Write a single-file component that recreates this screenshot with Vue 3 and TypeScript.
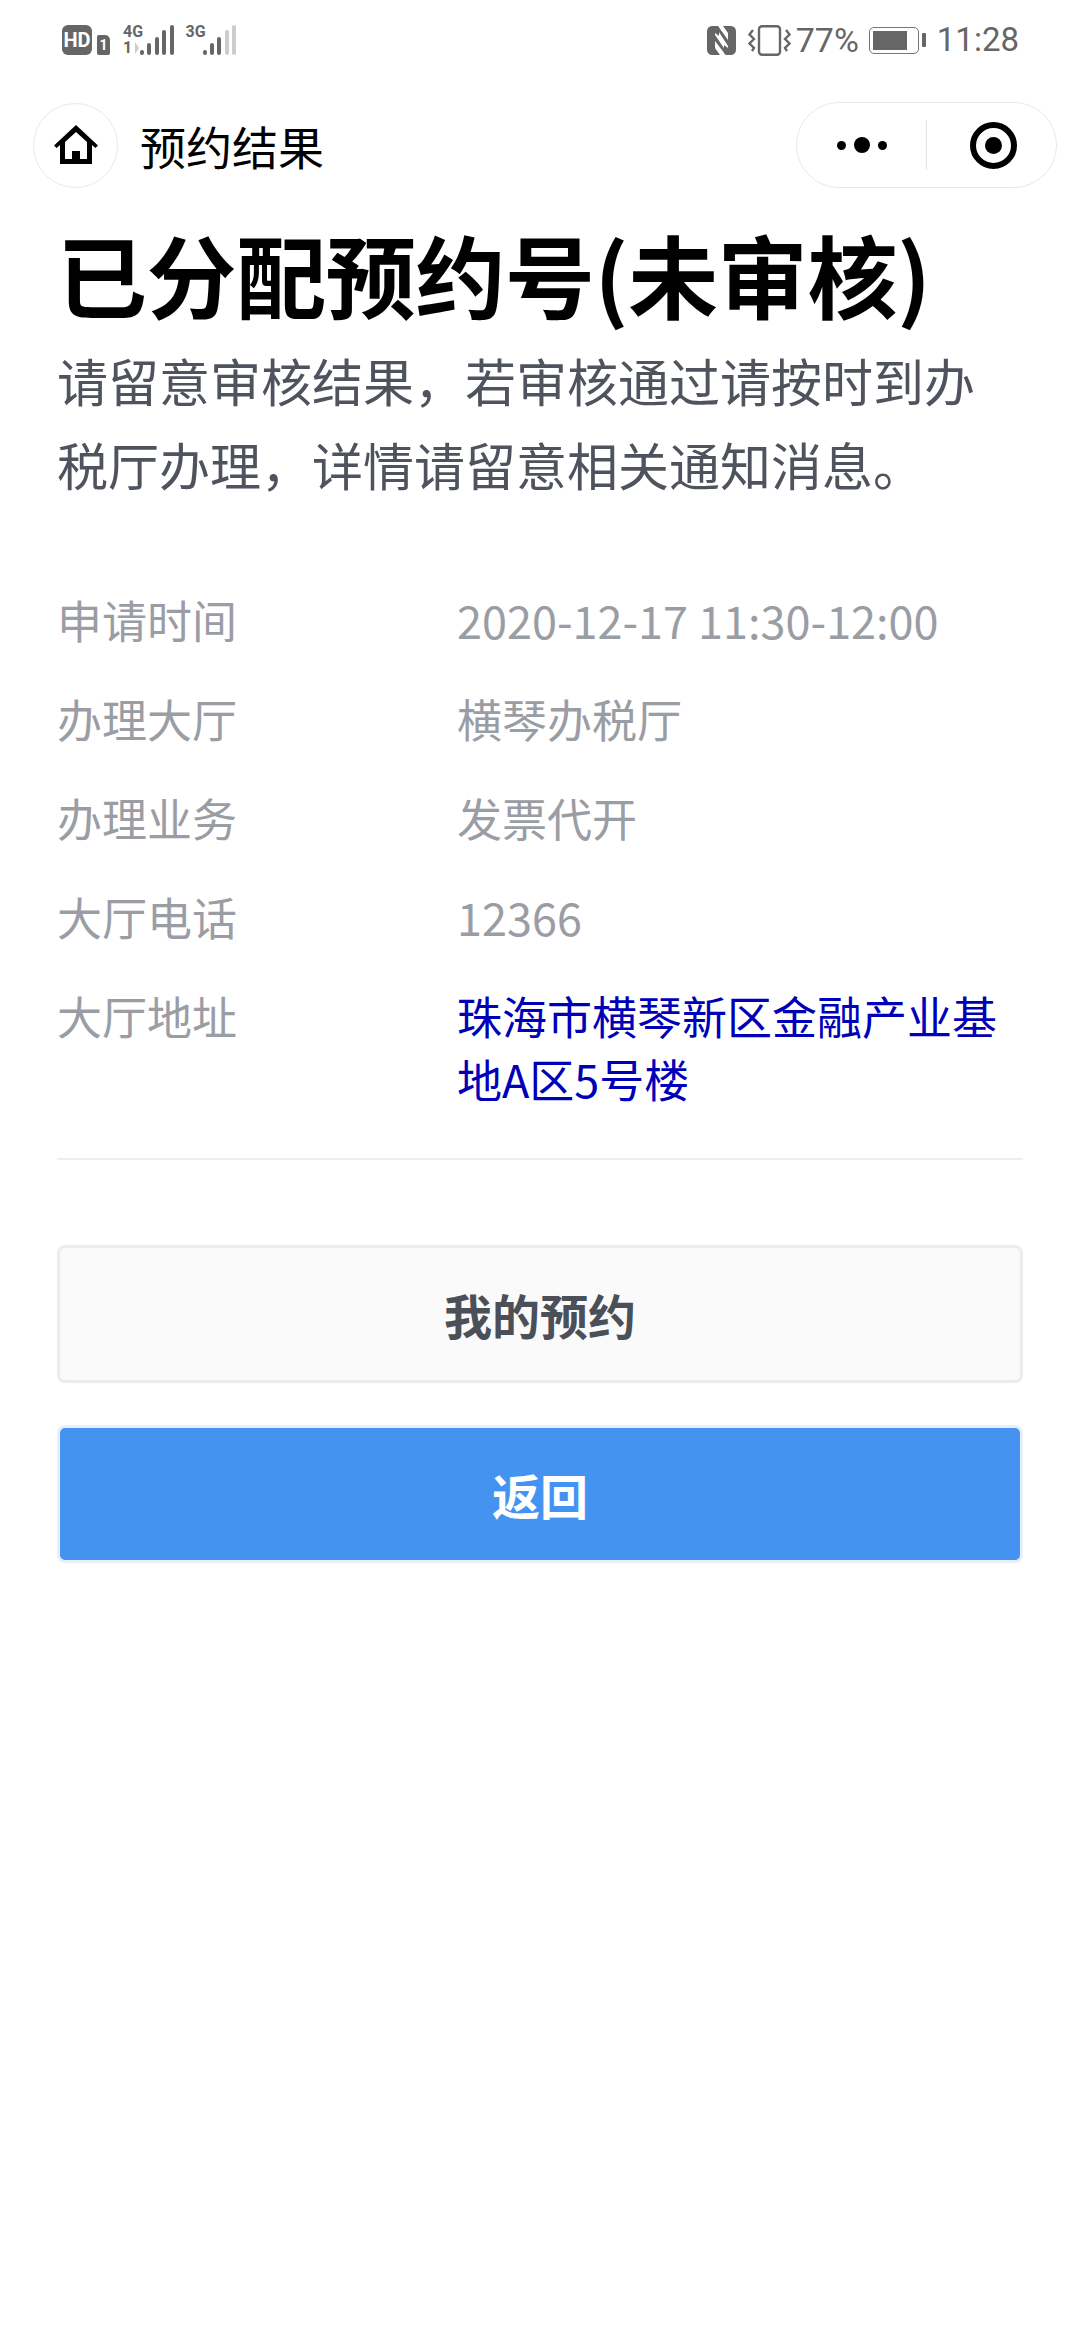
<script setup lang="ts">
const rows: { label: string; value: string; link?: boolean }[] = [
  { label: '申请时间', value: '2020-12-17 11:30-12:00' },
  { label: '办理大厅', value: '横琴办税厅' },
  { label: '办理业务', value: '发票代开' },
  { label: '大厅电话', value: '12366' },
  { label: '大厅地址', value: '珠海市横琴新区金融产业基地A区5号楼', link: true },
]
const bars = [5, 12, 18, 25, 30]
</script>

<template>
  <div class="page">
    <header class="status">
      <div class="status__left">
        <span class="hd">HD</span>
        <span class="sim">1</span>
        <div class="net">
          <span class="net__top">4G</span>
          <span class="net__sub">1<svg width="6" height="12" viewBox="0 0 6 12"><path d="M2 0v12l4-6z" fill="#ccc" /></svg></span>
        </div>
        <div class="bars">
          <i v-for="(h, i) in bars" :key="i" :style="{ height: h + 'px' }" />
        </div>
        <div class="net net--3g"><span class="net__top">3G</span></div>
        <div class="bars bars--weak">
          <i v-for="(h, i) in bars" :key="i" :style="{ height: h + 'px' }" />
        </div>
      </div>
      <div class="status__right">
        <svg class="nfc" width="31" height="31" viewBox="0 0 31 31">
          <path d="M7 1h3c2 0 3 1 3 3v7L9 8v15l5 7H7c-4 0-6-2-6-6V7c0-4 2-6 6-6z" fill="#666" />
          <path d="M24 30h-3c-2 0-3-1-3-3v-7l4 3V8l-5-7h7c4 0 6 2 6 6v17c0 4-2 6-6 6z" fill="#666" />
          <path d="M9 1h3l10 14v6z M9 10l13 19h-3L9 16z" fill="#666" />
        </svg>
        <svg class="vibrate" width="43" height="31" viewBox="0 0 43 31">
          <rect x="11" y="1.2" width="21" height="28.6" rx="3" fill="none" stroke="#666" stroke-width="2.4" />
          <path d="M5 5 1.5 9.5 6 14l-4.500 4.500L6 23l-2 3M38 5l3.500 4.500L37 14l4.500 4.500L37 23l2 3" fill="none" stroke="#666" stroke-width="2.400" />
        </svg>
        <span class="pct">77%</span>
        <div class="battery"><div class="battery__fill" /></div>
        <div class="battery__cap" />
        <span class="time">11:28</span>
      </div>
    </header>

    <nav class="nav">
      <div class="nav__home">
        <svg width="46" height="42" viewBox="0 0 46 42">
          <path d="M1 21.500 23 1l22 20.500-2.600 2.600-3.400-3V40H7V21.100l-3.400 3z" fill="#000" />
          <path d="M12 18 23 8l11 10v17h-7v-8h-8v8h-7z" fill="#fff" />
        </svg>
      </div>
      <span class="nav__title">预约结果</span>
      <div class="capsule">
        <div class="capsule__more">
          <i class="dot" /><i class="dot dot--big" /><i class="dot" />
        </div>
        <div class="capsule__line" />
        <div class="capsule__close"><i /></div>
      </div>
    </nav>

    <main class="content">
      <h1 class="title">已分配预约号(未审核)</h1>
      <p class="desc">请留意审核结果，若审核通过请按时到办税厅办理，详情请留意相关通知消息。</p>

      <dl class="info">
        <div v-for="row in rows" :key="row.label" class="info__row">
          <dt>{{ row.label }}</dt>
          <dd :class="{ 'info__link': row.link }">{{ row.value }}</dd>
        </div>
      </dl>

      <button class="btn btn--default">我的预约</button>
      <button class="btn btn--primary">返回</button>
    </main>
  </div>
</template>

<style>
html,
body {
  margin: 0;
  background: #fff;
}
</style>

<style scoped>
.page {
  width: 1080px;
  height: 2340px;
  overflow: hidden;
  background: #fff;
  font-family: "Noto Sans CJK SC", "Noto Sans", sans-serif;
}

.status {
  height: 80px;
  padding: 0 61px 0 62px;
  box-sizing: border-box;
  display: flex;
  justify-content: space-between;
  align-items: center;
  color: #666;
}

.status__left,
.status__right {
  display: flex;
  align-items: center;
}

.hd {
  width: 30px;
  height: 30px;
  border-radius: 6px;
  background: #666;
  color: #fff;
  font: 700 20px/30px "Roboto", sans-serif;
  text-align: center;
}

.sim {
  width: 13px;
  height: 20px;
  margin: 10px 0 0 5px;
  border-radius: 2px 5px 2px 2px;
  background: #666;
  color: #fff;
  font: 700 14px/20px "Roboto", sans-serif;
  text-align: center;
}

.net {
  width: 17px;
  height: 30px;
  margin-left: 13px;
  display: flex;
  flex-direction: column;
  justify-content: space-between;
  font: 700 16px/14px "Roboto", sans-serif;
}

.net__sub {
  display: flex;
  align-items: center;
  gap: 1px;
}

.net--3g {
  margin-left: 12px;
}

.bars {
  display: flex;
  align-items: flex-end;
  gap: 3.400px;
  height: 30px;
}

.bars i {
  width: 4px;
  border-radius: 2px;
  background: #666;
}

.bars--weak i:nth-child(n + 4) {
  background: #ccc;
}

.nfc {
  margin-right: 11px;
}

.vibrate {
  margin-right: 5px;
}

.pct {
  font: 400 34px/40px "Roboto", sans-serif;
}

.battery {
  width: 50px;
  height: 27px;
  margin-left: 10px;
  padding: 3px;
  box-sizing: border-box;
  border: 1.500px solid #777;
  border-radius: 5px;
}

.battery__fill {
  width: 34px;
  height: 100%;
  background: #666;
}

.battery__cap {
  width: 4px;
  height: 14px;
  margin-left: 3px;
  border-radius: 1px;
  background: #666;
}

.time {
  margin-left: 11px;
  font: 400 33px/40px "Roboto", sans-serif;
}

.nav {
  height: 86px;
  margin-top: 22px;
  padding: 0 23px 0 33px;
  display: flex;
  align-items: center;
}

.nav__home {
  width: 85px;
  height: 85px;
  box-sizing: border-box;
  border: 1.500px solid #e8e8e8;
  border-radius: 50%;
  display: flex;
  justify-content: center;
  align-items: center;
}

.nav__title {
  margin-left: 22px;
  font-size: 46px;
  color: #000;
}

.capsule {
  margin-left: auto;
  width: 261px;
  height: 86px;
  box-sizing: border-box;
  border: 1.500px solid #e8e8e8;
  border-radius: 43px;
  display: flex;
  align-items: center;
}

.capsule__more {
  width: 129px;
  box-sizing: border-box;
  display: flex;
  justify-content: center;
  align-items: center;
  gap: 8px;
}

.dot {
  width: 9px;
  height: 9px;
  border-radius: 50%;
  background: #000;
}

.dot--big {
  width: 16px;
  height: 16px;
}

.capsule__line {
  width: 1px;
  height: 50px;
  background: #e3e3e3;
}

.capsule__close {
  flex: 1;
  padding-left: 4px;
  display: flex;
  justify-content: center;
}

.capsule__close i {
  width: 47px;
  height: 47px;
  box-sizing: border-box;
  border: 6px solid #000;
  border-radius: 50%;
  display: flex;
  justify-content: center;
  align-items: center;
}

.capsule__close i::after {
  content: "";
  width: 17px;
  height: 17px;
  border-radius: 50%;
  background: #000;
}

.content {
  padding: 0 57px;
}

.title {
  margin: 20px 0 0;
  font-size: 90px;
  line-height: 130px;
  font-weight: 700;
  letter-spacing: -0.4px;
  color: #000;
  white-space: nowrap;
}

.desc {
  margin: 0;
  font-size: 51px;
  line-height: 84px;
  color: #4f535d;
}

.info {
  margin: 64px 0 0;
  padding-bottom: 30px;
  border-bottom: 2px solid #eee;
}

.info__row {
  display: flex;
  font-size: 45px;
  line-height: 63px;
  padding: 18px 0;
  color: #9a9da3;
}

.info dt {
  width: 400px;
  flex-shrink: 0;
}

.info dd {
  margin: 0;
}

.info__link {
  color: #0000b8;
}

.btn {
  display: block;
  width: 100%;
  height: 138px;
  padding: 0;
  box-sizing: border-box;
  border-radius: 8px;
  font-family: inherit;
  font-size: 48px;
  font-weight: 700;
}

.btn--default {
  margin-top: 85px;
  border: 3px solid #ececec;
  background: #fafafa;
  color: #4b4f58;
}

.btn--primary {
  margin-top: 42px;
  border: 3px solid #e8eff8;
  background: #4593f1;
  color: #fff;
}
</style>
